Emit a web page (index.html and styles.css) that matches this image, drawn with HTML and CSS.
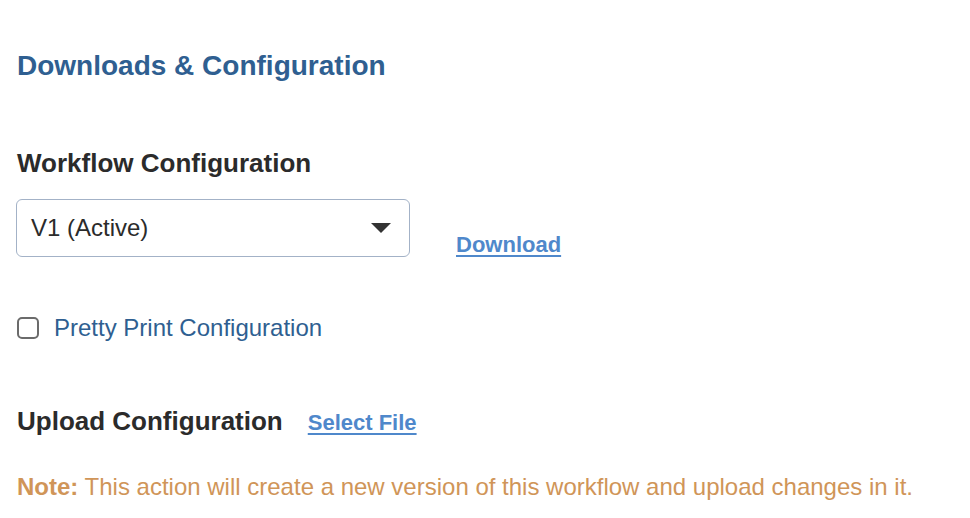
FILE: index.html
```html
<!DOCTYPE html>
<html>
<head>
<meta charset="utf-8">
<link rel="stylesheet" href="styles.css">
</head>
<body>
<main class="page">
  <h2 class="title">Downloads &amp; Configuration</h2>
  <section class="workflow">
    <h3 class="label">Workflow Configuration</h3>
    <div class="row">
      <div class="select">
        <span class="select-value">V1 (Active)</span>
        <svg class="caret" width="20" height="10" viewBox="0 0 20 10"><path d="M0 0 H20 L10 10 Z" fill="#333"/></svg>
      </div>
      <a class="link download" href="#">Download</a>
    </div>
  </section>
  <label class="check">
    <span class="box"></span>
    <span class="check-text">Pretty Print Configuration</span>
  </label>
  <div class="upload">
    <h3 class="label">Upload Configuration</h3>
    <a class="link" href="#">Select File</a>
  </div>
  <p class="note"><strong>Note:</strong> This action will create a new version of this workflow and upload changes in it.</p>
</main>
</body>
</html>
```
FILE: styles.css
```css
* { box-sizing: border-box; }
html, body { margin: 0; padding: 0; background: #fff; }
body { font-family: "Liberation Sans", Arial, Helvetica, sans-serif; }
.page { padding: 50px 16px 0 17px; }
.title { margin: 0; font-size: 28px; font-weight: bold; color: #2f5f91; line-height: 32px; }
.workflow { margin-top: 66px; }
.label { margin: 0; font-size: 26px; font-weight: bold; color: #2b2b2b; line-height: 30px; }
.row { display: flex; align-items: flex-end; margin-top: 21px; }
.select { width: 394px; height: 58px; border: 1.5px solid #a3b2c7; border-radius: 6px; display: flex; align-items: center; justify-content: space-between; padding: 0 18px 0 14px; margin-left: -1px; }
.select-value { font-size: 24px; color: #2b2b2b; }
.caret { display: block; }
.link { font-size: 22px; font-weight: bold; color: #4f88cb; text-decoration: underline; text-underline-offset: 3px; }
.download { margin-left: 46px; margin-bottom: -1px; }
.check { display: flex; align-items: center; gap: 15px; margin-top: 57px; }
.box { width: 22px; height: 22px; border: 2px solid #6b6b6b; border-radius: 5px; }
.check-text { font-size: 24px; color: #2f5f91; }
.upload { display: flex; align-items: baseline; gap: 25px; margin-top: 64px; }
.note { margin: 37px 0 0; font-size: 24px; color: #d09558; }
.note strong { font-weight: bold; }
```
